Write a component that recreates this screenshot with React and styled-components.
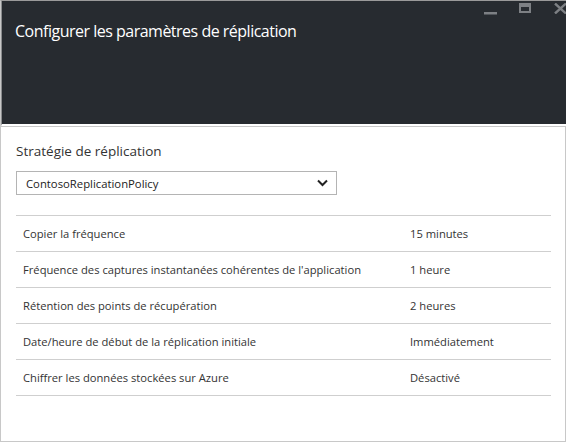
import styled, { createGlobalStyle } from "styled-components"

const GlobalStyle = createGlobalStyle`
html, body {
  margin: 0;
  padding: 0;
  background: #ffffff;
}
body {
  font-family: "Open Sans", "Noto Sans", sans-serif;
  color: #333333;
}
`

const Blade = styled.div`
width: 566px;
height: 442px;
box-sizing: border-box;
border: 1px solid #c8c8c8;
border-top-color: #9a9a9a;
border-right: none;
background: #ffffff;
display: flex;
flex-direction: column;
overflow: hidden;
`
const Header = styled.div`
height: 123px;
background: #272b30;
border-left: 1px solid #8a8c8e;
border-bottom: 2px solid #ffffff;
display: flex;
justify-content: space-between;
align-items: flex-start;
`
const Title = styled.h1`
margin: 19px 0 0 13px;
font-size: 16px;
font-weight: 400;
color: #ffffff;
letter-spacing: -0.5px;
`
const Controls = styled.div`
display: flex;
align-items: flex-start;
margin-top: 2px;
margin-right: -1px;
`
const ControlIcon = styled.svg`
display: block;
margin-left: ${(props) => props.$gap}px;
`
const Body = styled.div`
flex: 1;
padding: 0 14px 0 15px;
border-top: 1px solid #c8c8c8;
border-right: 1px solid #c8c8c8;
`
const SectionTitle = styled.div`
margin-top: 15px;
font-size: 13.5px;
color: #333333;
`
const Dropdown = styled.div`
margin-top: 11px;
width: 321px;
height: 24px;
box-sizing: border-box;
border: 1px solid #b4b4b4;
display: flex;
align-items: center;
justify-content: space-between;
padding: 0 8px 0 9px;
font-size: 11.3px;
color: #222222;
`
const List = styled.div`
margin-top: 20px;
border-top: 1px solid #cfcfcf;
`
const Row = styled.div`
height: 36px;
box-sizing: border-box;
border-bottom: 1px solid #cfcfcf;
display: grid;
grid-template-columns: 387px 1fr;
align-items: center;
padding-left: 7px;
font-size: 11.2px;
color: #333333;
`

const rows = [
  ["Copier la fréquence", "15 minutes"],
  ["Fréquence des captures instantanées cohérentes de l'application", "1 heure"],
  ["Rétention des points de récupération", "2 heures"],
  ["Date/heure de début de la réplication initiale", "Immédiatement"],
  ["Chiffrer les données stockées sur Azure", "Désactivé"],
]

const App = () => {
  return (
    <>
      <GlobalStyle />
      <Blade>
        <Header>
          <Title>Configurer les paramètres de réplication</Title>
          <Controls>
            <ControlIcon $gap={0} width="13" height="12" viewBox="0 0 13 12">
              <rect x="0" y="9" width="13" height="2.5" fill="#7d8084" />
            </ControlIcon>
            <ControlIcon $gap={22} width="12" height="10" viewBox="0 0 12 10">
              <rect x="1" y="1" width="10" height="8" fill="none" stroke="#7d8084" strokeWidth="2" />
              <rect x="1" y="1" width="10" height="3" fill="#7d8084" />
            </ControlIcon>
            <ControlIcon $gap={23} width="13" height="11" viewBox="0 0 13 11">
              <path d="M1 0.5 L12 10.5 M12 0.5 L1 10.5" stroke="#7d8084" strokeWidth="2.4" />
            </ControlIcon>
          </Controls>
        </Header>
        <Body>
          <SectionTitle>Stratégie de réplication</SectionTitle>
          <Dropdown>
            <span>ContosoReplicationPolicy</span>
            <svg width="11" height="8" viewBox="0 0 11 8">
              <path d="M1 1.5 L5.5 6 L10 1.5" fill="none" stroke="#222" strokeWidth="2" />
            </svg>
          </Dropdown>
          <List>
            {rows.map(([label, value]) => (
              <Row key={label}>
                <span>{label}</span>
                <span>{value}</span>
              </Row>
            ))}
          </List>
        </Body>
      </Blade>
    </>
  )
}

export default App
